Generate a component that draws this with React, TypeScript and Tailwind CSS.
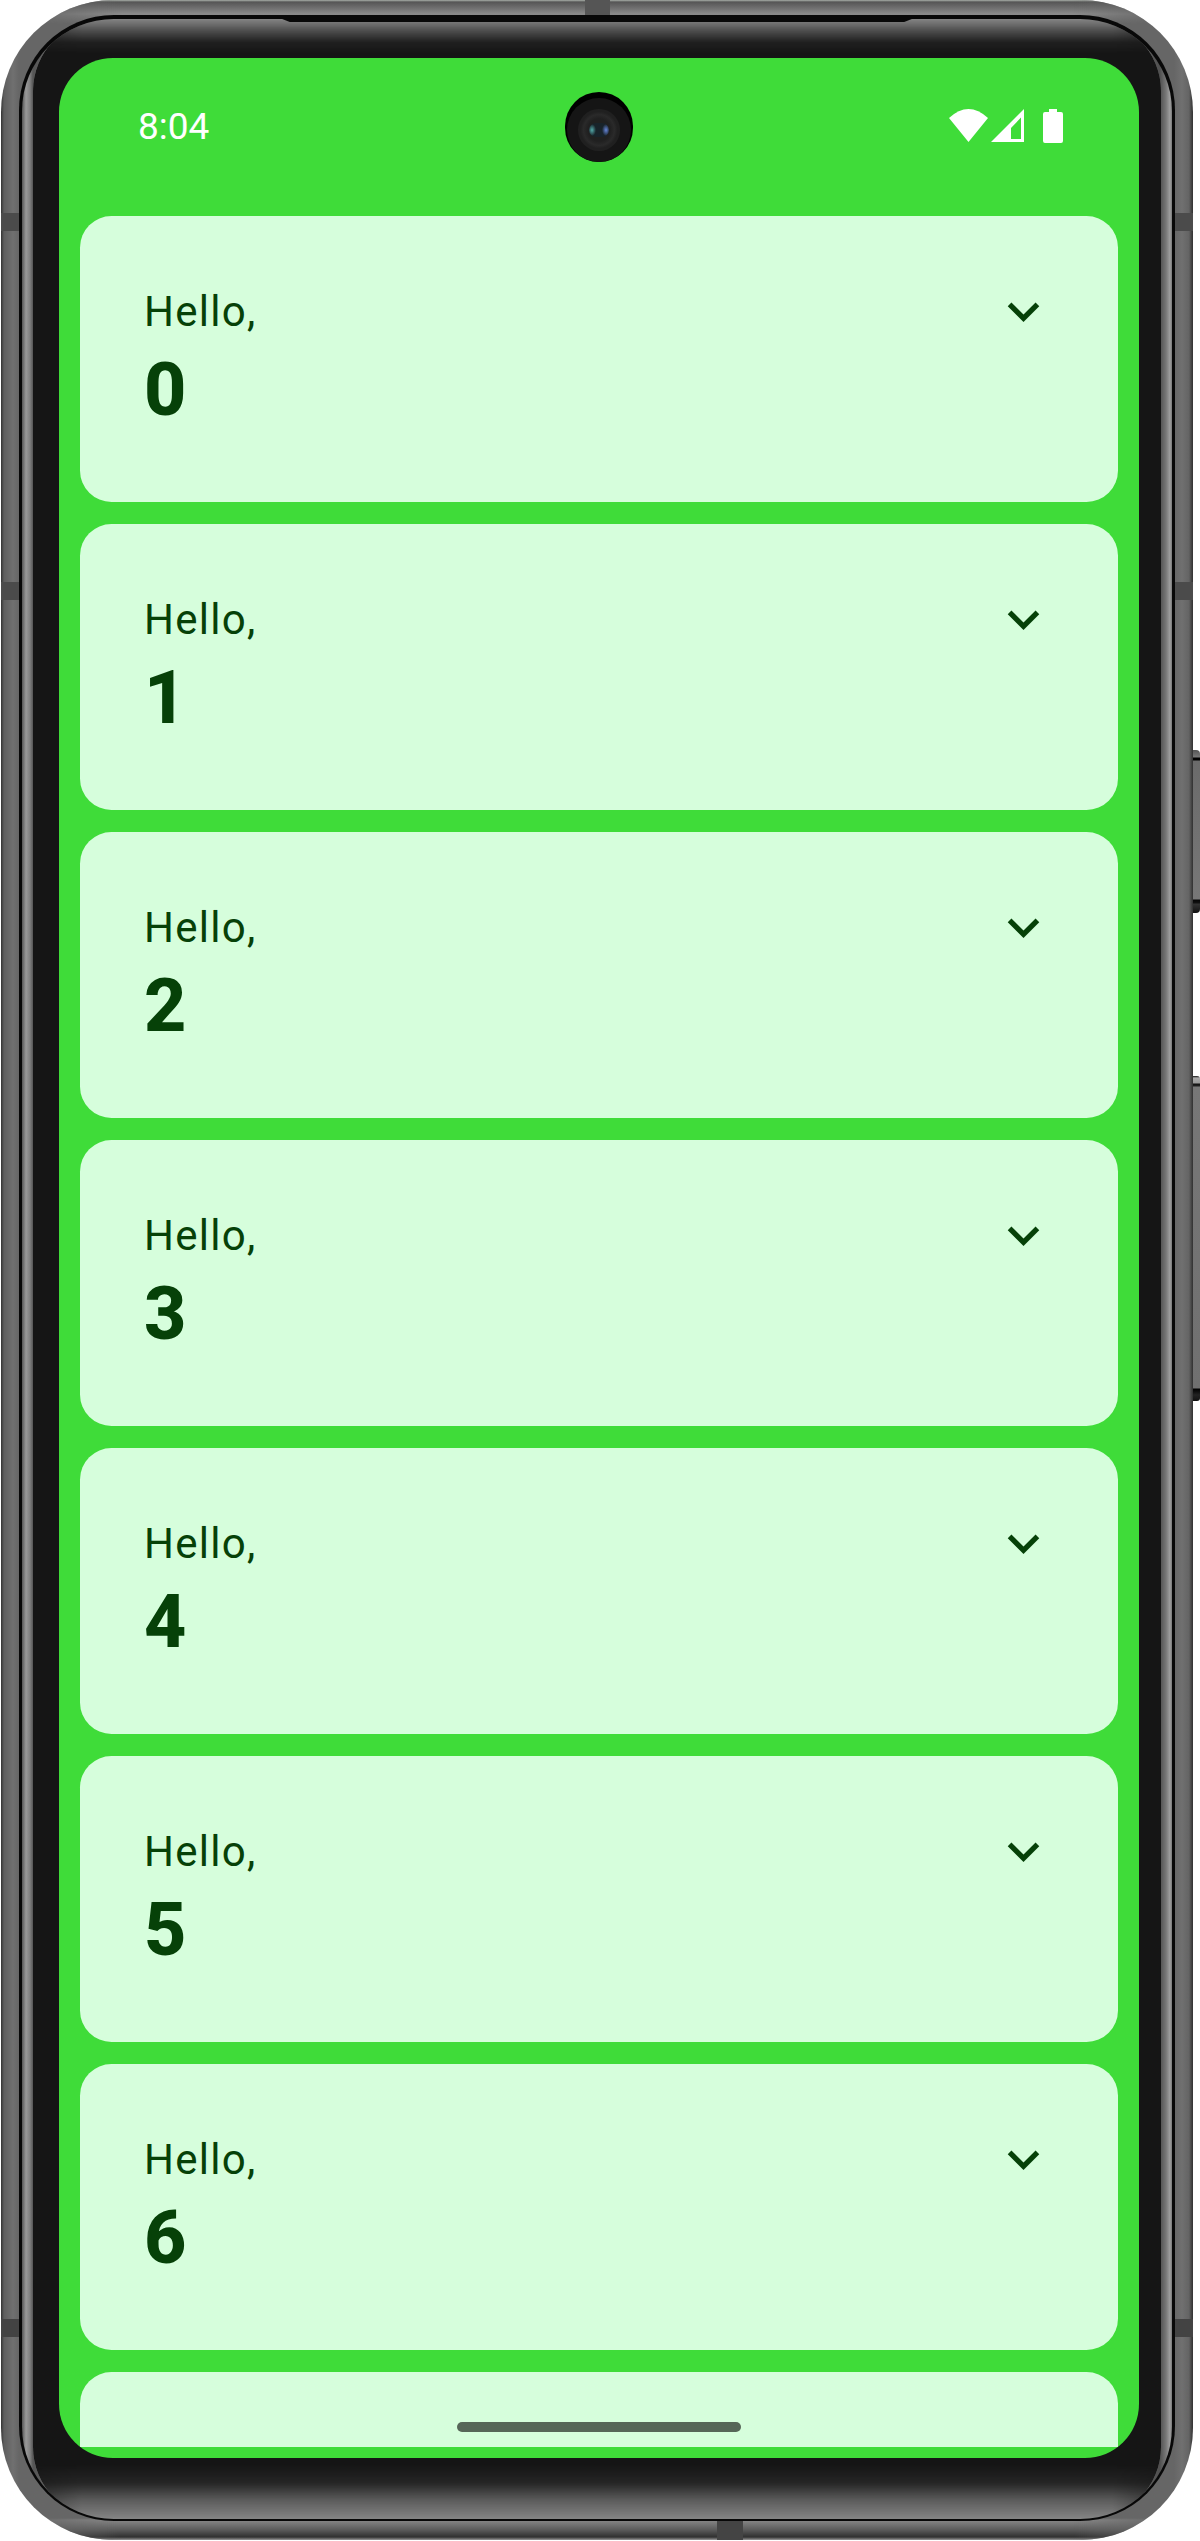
import React from "react";

const Chevron = () => (
  <svg viewBox="0 0 24 24" className="size-[63px] shrink-0" fill="#064108">
    <path d="M16.59 8.59 12 13.17 7.41 8.59 6 10l6 6 6-6z" />
  </svg>
);

const Greeting = ({ name }: { name: number }) => (
  <article className="flex h-[286px] shrink-0 items-start justify-between rounded-[31.5px] bg-[#d6fedc] pt-16 pr-[63px] pl-16 text-[#064108]">
    <div>
      <p className="text-[42px] leading-[63px] tracking-[1.3px]">Hello,</p>
      <p className="text-[73.5px] leading-[94px] font-extrabold">{name}</p>
    </div>
    <Chevron />
  </article>
);

const Camera = () => (
  <div className="mt-[34px] h-[70px] w-[68px] overflow-hidden rounded-full bg-black">
    <div className="mx-auto mt-[6px] flex size-[64px] items-center justify-center rounded-full bg-[#151515]">
      <div className="flex size-[42px] items-center justify-center rounded-full bg-[radial-gradient(circle,#202020_38%,#2a2a2a_52%,#202020_62%)]">
        <div className="h-[14px] w-[20px] rounded-full bg-[#18232a] bg-[radial-gradient(ellipse_4px_6px_at_3px_7px,#54aaa9,transparent),radial-gradient(ellipse_4px_6px_at_17px_7px,#6685d8,transparent)]" />
      </div>
    </div>
  </div>
);

const StatusBar = () => (
  <header className="grid h-[158px] shrink-0 grid-cols-[427px_68px_1fr] items-start pr-[75px] pl-[79px] text-white">
    <span className="pt-[47px] text-[37px] leading-[44px]">8:04</span>
    <Camera />
    <svg className="mt-[50px] h-[36px] w-[116px] justify-self-end" viewBox="949 108 116 36" fill="white">
      <path d="M950 118Q969.500 100 989 118L969.500 142Z" />
      <path fillRule="evenodd" d="M992 142 1025 109V142ZM1012 139H1022V117.500L1012 128Z" />
      <path d="M1050 109h8v3h4q2 0 2 2v27q0 2-2 2h-16q-2 0-2-2v-27q0-2 2-2h4z" />
    </svg>
  </header>
);

const Screen = () => (
  <main className="relative flex h-[2400px] w-[1080px] flex-col overflow-hidden rounded-[54px] bg-[#3fdc39]">
    <StatusBar />
    <section className="mx-[21px] flex flex-col gap-[22px]">
      {[0, 1, 2, 3, 4, 5, 6].map((n) => (
        <Greeting key={n} name={n} />
      ))}
      <div className="h-[75px] shrink-0 rounded-t-[31.5px] bg-[#d6fedc]" />
    </section>
    <div className="absolute inset-x-0 bottom-[26px] mx-auto h-[10px] w-[284px] rounded-full bg-[#566658]" />
  </main>
);

export default function App() {
  return (
    <div className="flex h-[2541px] w-[1200px] overflow-hidden bg-white pl-px font-[Roboto,sans-serif]">
      <div className="relative h-[2540px] w-[1192px] shrink-0 overflow-hidden rounded-[112px] bg-[linear-gradient(90deg,#333_0,#5e5e5e_3px,#707070_12px,#666_18px,#666_1173px,#707070_1181px,#646464_1188px,#303030_1192px)] pt-[15px] pl-[18px]">
        <div className="absolute inset-0 bg-[linear-gradient(#aab0aa_0,#555_2px,#8a8a8a_14px,transparent_24px,transparent_2518px,#888_2520px,#5a5a5a_2530px,#303030_2537px,#999_2540px)] [mask-image:linear-gradient(90deg,transparent_20px,#000_120px,#000_1072px,transparent_1172px)]" />
        <div className="absolute inset-0 bg-[linear-gradient(transparent_213px,#4b4b4b_213px,#4b4b4b_231px,transparent_231px,transparent_582px,#4b4b4b_582px,#4b4b4b_600px,transparent_600px,transparent_2319px,#434343_2319px,#434343_2337px,transparent_2337px)]" />
        <div className="absolute inset-0 bg-[linear-gradient(90deg,transparent_584px,#555_584px,#555_609px,transparent_609px),linear-gradient(90deg,transparent_716px,#444_716px,#444_742px,transparent_742px)] bg-[size:100%_20px] bg-[position:top,bottom] bg-no-repeat" />

        <div className="relative h-[2506px] w-[1156px] rounded-[95px] bg-[#080808] pt-[4px] pl-[3px]">
          <div className="relative h-[2500px] w-[1150px] overflow-hidden rounded-[92px] bg-[linear-gradient(90deg,#555_0,#999_4px,#808080_8px,#555_11px,transparent_60px,transparent_1090px,#505050_1138px,#777_1144px,#a0a0a0_1148px,#777_1150px),linear-gradient(#858585,#858585)] pt-[39px] pl-[37px]">
            <div className="absolute inset-x-[11px] inset-y-0 rounded-[72px] bg-[#151515] [mask-image:linear-gradient(transparent_0,rgba(0,0,0,0.5)_12px,rgba(0,0,0,0.9)_23px,#000_34px,#000_2446px,rgba(0,0,0,0.85)_2464px,rgba(0,0,0,0.35)_2482px,transparent_2500px)]" />
            <Screen />
          </div>
          <div className="absolute inset-x-0 top-[2px] mx-auto h-[5px] w-[640px] bg-[#080808] [clip-path:polygon(0_0,100%_0,98%_100%,2%_100%)]" />
        </div>
      </div>
      <div className="flex w-[7px] shrink-0 flex-col gap-[163px] pt-[750px]">
        <div className="h-[163px] shrink-0 rounded-r-[4px] bg-[linear-gradient(#555_0,#777_7px,#000_8px,#000_10px,#6b6b6b_11px,#777_149px,#050505_150px,#111_153px,#333_154px,#111_163px)]" />
        <div className="h-[325px] shrink-0 rounded-r-[3px] bg-[linear-gradient(#111_0,#aaa_2px,#999_7px,#111_8px,#222_10px,#777_11px,#707070_312px,#000_313px,#222_319px,#111_325px)]" />
      </div>
    </div>
  );
}
